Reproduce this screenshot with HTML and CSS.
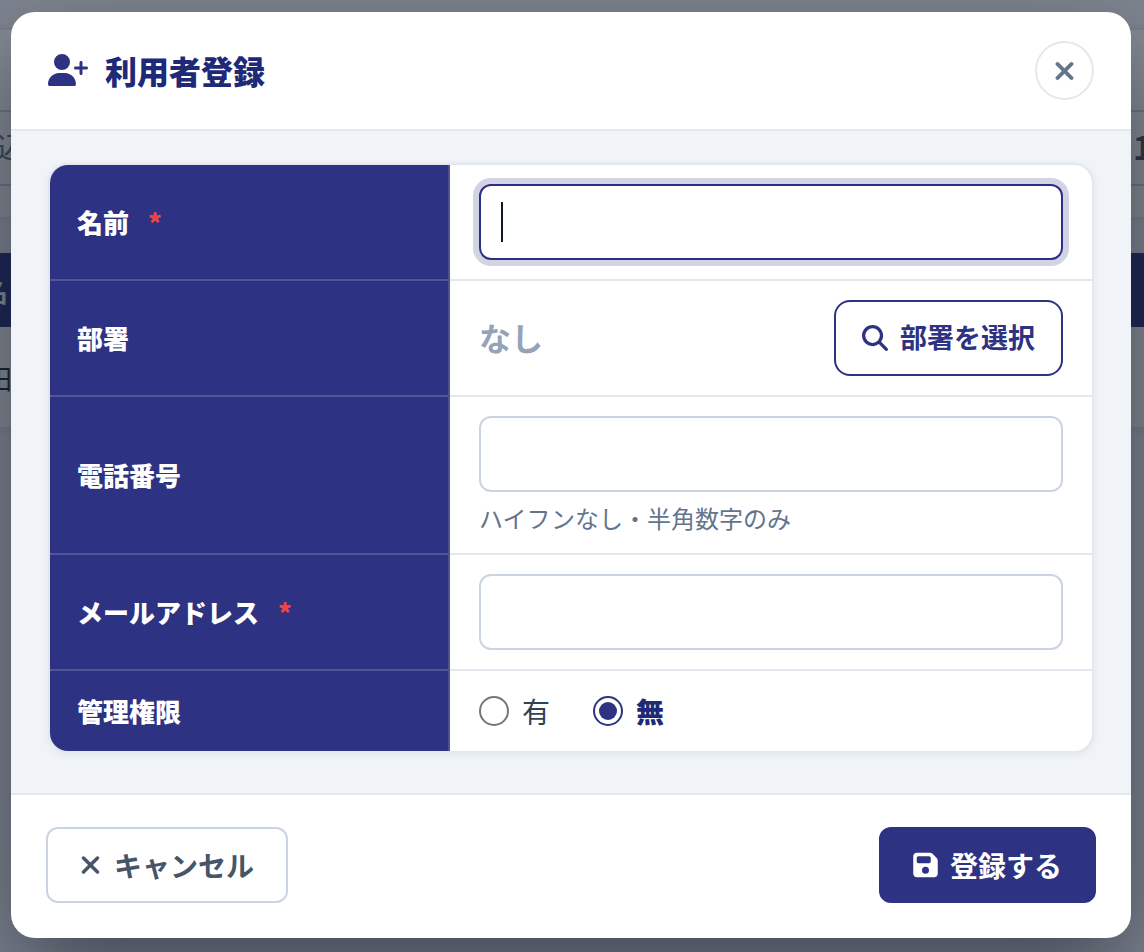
FILE: index.html
```html
<!DOCTYPE html>
<html lang="ja">
  <head>
    <meta charset="UTF-8" />
    <meta name="viewport" content="width=device-width, initial-scale=1.0" />
    <title>利用者登録</title>
    <link rel="stylesheet" href="styles.css">
  </head>
  <body>
    <!-- 背面の一覧画面 -->
    <div class="page" aria-hidden="true">
      <div class="panel">
        <div class="search-row"><span>込</span><strong>1</strong></div>
      </div>
      <div class="list">
        <div class="list-head">名</div>
        <div class="list-row">田</div>
      </div>
    </div>

    <div class="overlay">
      <form class="modal" role="dialog" aria-labelledby="modal-title">
        <header class="modal-header">
          <h1 class="modal-title" id="modal-title">
            <svg class="icon-user" viewBox="0 0 640 512"><path d="M96 128a128 128 0 1 1 256 0A128 128 0 1 1 96 128zM0 482.3C0 383.8 79.8 304 178.3 304h91.4C368.2 304 448 383.8 448 482.3c0 16.4-13.3 29.7-29.7 29.7H29.7C13.3 512 0 498.7 0 482.3zM504 312V248H440c-13.3 0-24-10.7-24-24s10.7-24 24-24h64V136c0-13.3 10.7-24 24-24s24 10.7 24 24v64h64c13.3 0 24 10.7 24 24s-10.7 24-24 24H552v64c0 13.3-10.7 24-24 24s-24-10.7-24-24z"/></svg>
            利用者登録
          </h1>
          <button type="button" class="btn-close" aria-label="閉じる">
            <svg class="icon-x" viewBox="0 0 384 512"><path d="M342.6 150.6c12.5-12.5 12.5-32.8 0-45.3s-32.8-12.5-45.3 0L192 210.7 86.6 105.4c-12.5-12.5-32.8-12.5-45.3 0s-12.5 32.8 0 45.3L146.7 256 41.4 361.4c-12.5 12.5-12.5 32.8 0 45.3s32.8 12.5 45.3 0L192 301.3 297.4 406.6c12.5 12.5 32.8 12.5 45.3 0s12.5-32.8 0-45.3L237.3 256 342.6 150.6z"/></svg>
          </button>
        </header>

        <div class="modal-body">
          <div class="form-card">
            <div class="form-row">
              <label class="form-label" for="name">名前<span class="required">*</span></label>
              <div class="form-field">
                <div class="input-wrap is-active">
                  <input class="input" type="text" id="name" required>
                </div>
              </div>
            </div>
            <div class="form-row">
              <div class="form-label">部署</div>
              <div class="form-field field-split">
                <span class="empty-value">なし</span>
                <button type="button" class="btn btn-select">
                  <svg class="icon-search" viewBox="0 0 512 512"><path d="M416 208c0 45.9-14.9 88.3-40 122.7L502.6 457.4c12.5 12.5 12.5 32.8 0 45.3s-32.8 12.5-45.3 0L330.7 376c-34.4 25.2-76.8 40-122.7 40C93.1 416 0 322.9 0 208S93.1 0 208 0S416 93.1 416 208zM208 352a144 144 0 1 0 0-288 144 144 0 1 0 0 288z"/></svg>
                  <span>部署を選択</span>
                </button>
              </div>
            </div>
            <div class="form-row">
              <label class="form-label" for="tel">電話番号</label>
              <div class="form-field">
                <input class="input" type="tel" id="tel" aria-describedby="tel-hint">
                <p class="hint" id="tel-hint">ハイフンなし・半角数字のみ</p>
              </div>
            </div>
            <div class="form-row">
              <label class="form-label" for="email">メールアドレス<span class="required">*</span></label>
              <div class="form-field">
                <input class="input" type="email" id="email" required>
              </div>
            </div>
            <div class="form-row">
              <div class="form-label" id="admin-label">管理権限</div>
              <div class="form-field radio-group" role="radiogroup" aria-labelledby="admin-label">
                <label class="radio"><input type="radio" name="admin" value="1"><span>有</span></label>
                <label class="radio"><input type="radio" name="admin" value="0" checked><span>無</span></label>
              </div>
            </div>
          </div>
        </div>

        <footer class="modal-footer">
          <button type="button" class="btn btn-cancel">
            <svg class="icon-cancel" viewBox="0 0 384 512"><path d="M342.6 150.6c12.5-12.5 12.5-32.8 0-45.3s-32.8-12.5-45.3 0L192 210.7 86.6 105.4c-12.5-12.5-32.8-12.5-45.3 0s-12.5 32.8 0 45.3L146.7 256 41.4 361.4c-12.5 12.5-12.5 32.8 0 45.3s32.8 12.5 45.3 0L192 301.3 297.4 406.6c12.5 12.5 32.8 12.5 45.3 0s12.5-32.8 0-45.3L237.3 256 342.6 150.6z"/></svg>
            キャンセル
          </button>
          <button type="submit" class="btn btn-submit">
            <svg class="icon-save" viewBox="0 0 448 512"><path d="M64 32C28.7 32 0 60.7 0 96V416c0 35.3 28.7 64 64 64H384c35.3 0 64-28.7 64-64V173.3c0-17-6.7-33.3-18.7-45.3L352 50.7C340 38.7 323.7 32 306.7 32H64zm0 96c0-17.7 14.3-32 32-32H288c17.7 0 32 14.3 32 32v64c0 17.7-14.3 32-32 32H96c-17.7 0-32-14.3-32-32V128zM224 288a64 64 0 1 1 0 128 64 64 0 1 1 0-128z"/></svg>
            登録する
          </button>
        </footer>
      </form>
    </div>
  </body>
</html>
```
FILE: styles.css
```css
* {
  box-sizing: border-box;
}

body {
  margin: 0;
  font-family: "Noto Sans CJK JP", "Noto Sans", sans-serif;
  color: #334155;
}

button,
input {
  font-family: inherit;
}

svg {
  fill: currentColor;
  flex-shrink: 0;
}

/* 背面の一覧画面 */
.page {
  position: fixed;
  inset: 0;
  overflow: hidden;
  background-color: #f0f4f8;
  padding-top: 28px;
}

.panel {
  margin: 0 -32px 36px;
  padding: 80px 0 31px;
  background-color: #fff;
  border-top: 2px solid #e2e8f0;
  box-shadow: 0 2px 8px rgba(0, 0, 0, 0.05);
}

.search-row {
  display: flex;
  align-items: center;
  justify-content: space-between;
  height: 76px;
  padding: 0 24px 4px 28px;
  border-top: 2px solid #cbd5e1;
  border-bottom: 2px solid #cbd5e1;
  color: #64748b;
  font-size: 28px;
}

.search-row strong {
  color: #475569;
  font-size: 32px;
}

.list {
  margin: 0 -32px;
  background-color: #fff;
  box-shadow: 0 2px 8px rgba(0, 0, 0, 0.05);
}

.list-head,
.list-row {
  display: flex;
  align-items: center;
}

.list-head {
  height: 74px;
  padding-left: 14px;
  background-color: #2d3282;
  color: #fff;
  font-size: 26px;
  font-weight: 700;
}

.list-row {
  height: 102px;
  padding-left: 18px;
  border-bottom: 2px solid #e2e8f0;
  color: #1e293b;
  font-size: 26px;
}

/* モーダル */
.overlay {
  position: fixed;
  inset: 0;
  overflow: auto;
  padding: 12px 13px 14px 11px;
  background-color: rgba(15, 23, 42, 0.5);
}

.modal {
  overflow: hidden;
  background-color: #fff;
  border-radius: 24px;
  box-shadow: 0 40px 100px rgba(15, 23, 35, 0.55);
}

.modal-header {
  display: flex;
  align-items: center;
  justify-content: space-between;
  padding: 29px 37px;
  border-bottom: 2px solid #e2e8f0;
}

.modal-title {
  display: flex;
  align-items: center;
  gap: 17px;
  margin: 0;
  padding-bottom: 2px;
  font-size: 32px;
  line-height: 48px;
  font-weight: 900;
  color: #1e2a78;
}

.icon-user {
  width: 40px;
  height: 32px;
  color: #2d3282;
}

.btn-close {
  display: flex;
  align-items: center;
  justify-content: center;
  width: 59px;
  height: 59px;
  padding: 0;
  background-color: #fff;
  border: 2px solid #e2e8f0;
  border-radius: 50%;
  color: #64748b;
  cursor: pointer;
}

.icon-x {
  width: 21px;
  height: 28px;
  stroke: currentColor;
  stroke-width: 8;
}

.modal-body {
  padding: 32px 37px 40px;
  background-color: #f0f4f9;
}

.form-card {
  overflow: hidden;
  background-color: #fff;
  border: 2px solid #e2e8f0;
  border-radius: 20px;
  box-shadow: 0 2px 8px rgba(15, 23, 42, 0.06);
}

.form-row {
  display: grid;
  grid-template-columns: 400px 1fr;
}

.form-label {
  display: flex;
  align-items: center;
  padding: 0 27px 2px;
  background-color: #2d3282;
  border-right: 2px solid #4f5193;
  border-bottom: 2px solid #535694;
  color: #fff;
  font-size: 26px;
  font-weight: 900;
}

.required {
  margin-left: 19px;
  color: #f04444;
}

.form-field {
  padding: 19px 29px;
  border-bottom: 2px solid #e2e8f0;
}

.form-row:last-child .form-label,
.form-row:last-child .form-field {
  border-bottom: none;
}

.input-wrap {
  position: relative;
}

.input {
  display: block;
  width: 100%;
  height: 76px;
  padding: 0 20px;
  background-color: #fff;
  border: 2px solid #cbd5e1;
  border-radius: 12px;
  color: #0f172a;
  font-size: 28px;
  outline: none;
}

.is-active .input,
.input:focus {
  border-color: #2d2f86;
  box-shadow: 0 0 0 6px #d2d3e3;
}

.is-active .input {
  caret-color: transparent;
}

.is-active::after {
  content: "";
  position: absolute;
  top: 18px;
  left: 22px;
  width: 2px;
  height: 40px;
  background-color: #0f172a;
}

.field-split {
  display: flex;
  align-items: center;
  justify-content: space-between;
}

.empty-value {
  padding-bottom: 2px;
  color: #94a3b8;
  font-size: 32px;
  font-weight: 700;
}

.hint {
  margin: 10px 0 0;
  color: #64748b;
  font-size: 24px;
  line-height: 32px;
}

.radio-group {
  display: flex;
  align-items: center;
  gap: 43px;
}

.radio {
  display: flex;
  align-items: center;
  gap: 13px;
  font-size: 28px;
  line-height: 42px;
  cursor: pointer;
}

.radio input {
  appearance: none;
  display: grid;
  place-items: center;
  width: 30px;
  height: 30px;
  margin: 0;
  border: 2px solid #767676;
  border-radius: 50%;
}

.radio input:checked {
  border-color: #2d3282;
}

.radio input:checked::before {
  content: "";
  width: 18px;
  height: 18px;
  background-color: #2d3282;
  border-radius: 50%;
}

.radio input:checked + span {
  color: #1e2a78;
  font-weight: 900;
}

.modal-footer {
  display: flex;
  justify-content: space-between;
  padding: 32px 35px 35px;
  border-top: 2px solid #e2e8f0;
}

.btn {
  display: flex;
  align-items: center;
  gap: 12px;
  height: 76px;
  padding: 0 32px;
  background-color: #fff;
  border: 2px solid #cbd5e1;
  border-radius: 12px;
  font-size: 28px;
  font-weight: 700;
  cursor: pointer;
}

.btn-select {
  padding: 0 26px;
  border-color: #2d3282;
  border-radius: 16px;
  color: #2d3282;
  font-size: 27px;
}

.btn-select span {
  padding-bottom: 4px;
}

.btn-cancel {
  gap: 13px;
  color: #475569;
}

.btn-submit {
  background-color: #2d3282;
  border-color: #2d3282;
  color: #fff;
}

.icon-search {
  width: 26px;
  height: 26px;
}

.icon-cancel {
  width: 21px;
  height: 28px;
}

.icon-save {
  width: 25px;
  height: 28px;
}
```
